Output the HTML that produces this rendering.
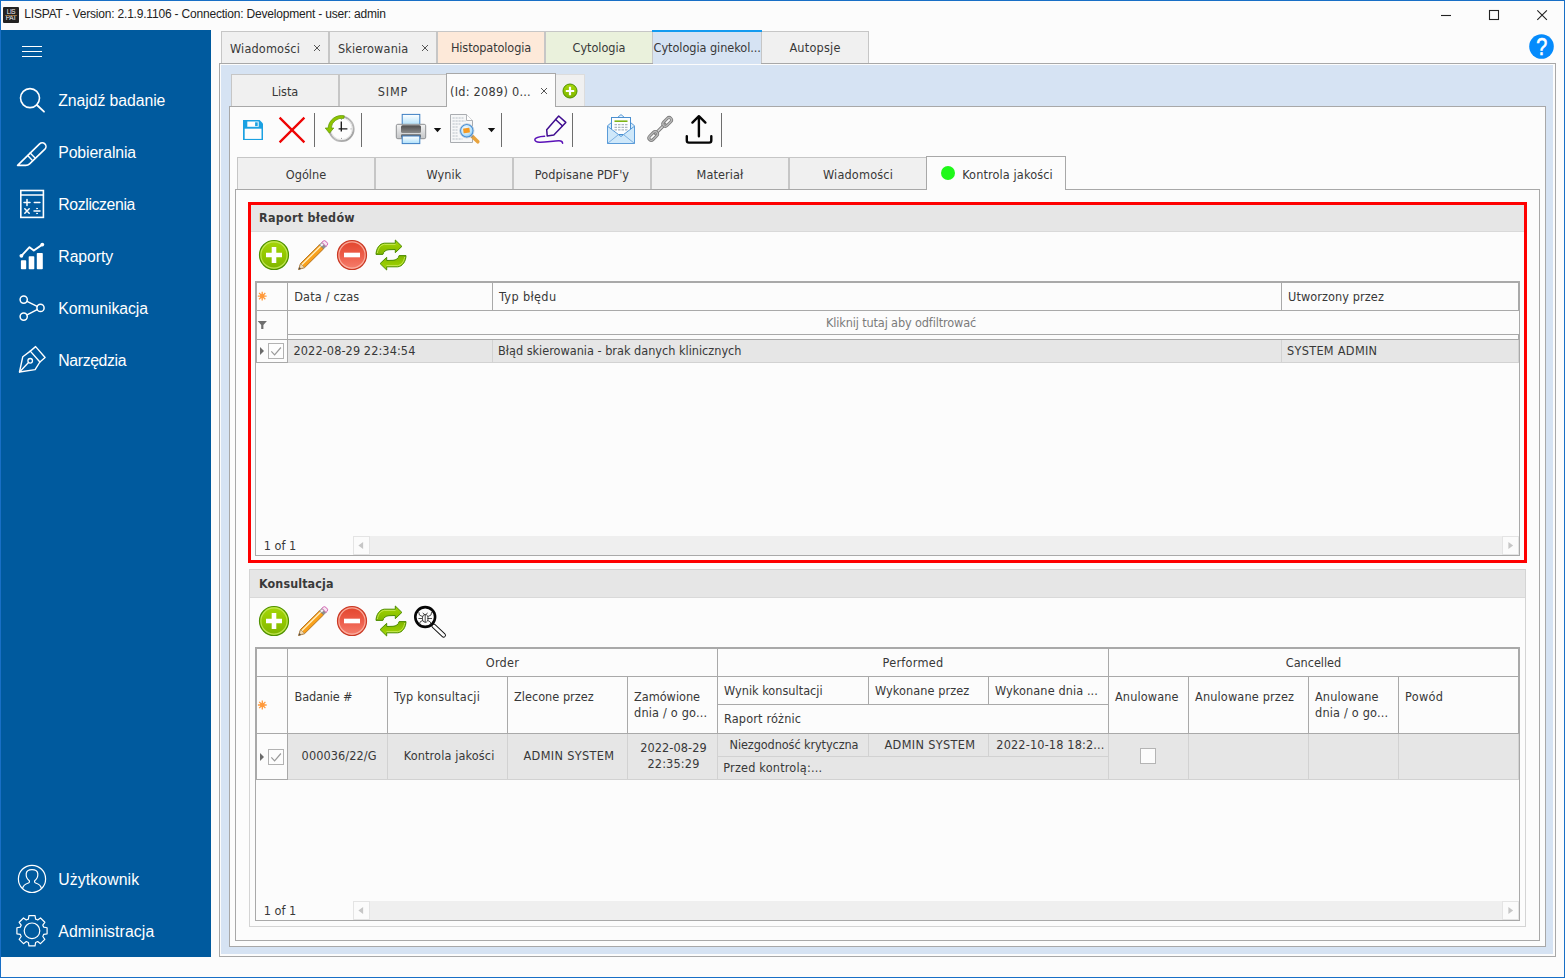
<!DOCTYPE html>
<html lang="pl"><head><meta charset="utf-8"><title>LISPAT</title>
<style>
html,body{margin:0;padding:0;overflow:hidden}
body{width:1565px;height:978px;position:relative;overflow:hidden;background:#fcfcfc;font-family:"DejaVu Sans Condensed","Liberation Sans",sans-serif;font-size:12.6px;color:#383838}
div,span,svg{position:absolute;box-sizing:border-box}
.t{white-space:nowrap;font-size:12.6px}
.b{white-space:nowrap;font-size:12.4px;font-weight:bold;color:#3a3a3a}
.s{white-space:nowrap;font-family:"Liberation Sans",sans-serif;font-size:15.8px;color:#fff}
.ti{white-space:nowrap;font-family:"Liberation Sans",sans-serif;font-size:12px;color:#222}
.g{color:#7b7b7b}
.tab{background:#f0f0f0;border:1px solid #c6c6c6;border-bottom:none}
.hl{background:#a9a9a9}
.cl{background:#d2d2d2}
</style></head><body>

<div style="left:0px;top:0px;width:1565px;height:978px;border:1px solid #186fc6;z-index:50;pointer-events:none"></div>
<div style="left:1px;top:1px;width:1563px;height:29px;background:#fcfcfc"></div>
<div style="left:3px;top:7px;width:16px;height:16px;background:#222;border-radius:1px"><span style="left:0;top:1.5px;width:16px;text-align:center;font:6.3px/6.6px 'Liberation Sans',sans-serif;color:#f2f2f2;letter-spacing:-0.3px">LIS<br>PAT</span><div style="left:2px;top:7.6px;width:12px;height:1px;background:#9a6a2a;opacity:.8"></div></div>
<span class="ti" style="left:24.3px;top:6px;line-height:16px;letter-spacing:-0.194px;">LISPAT - Version: 2.1.9.1106 - Connection: Development - user: admin</span>
<svg style="left:1436px;top:5px" width="120" height="20" viewBox="0 0 120 20"><g stroke="#222" stroke-width="1.1" fill="none"><path d="M5 10.5h10"/><rect x="53.5" y="5.5" width="9" height="9"/><path d="M101.3 5.3l9.6 9.6M110.9 5.3l-9.6 9.6"/></g></svg>
<svg style="left:1529px;top:34px" width="25" height="25" viewBox="0 0 25 25"><circle cx="12.5" cy="12.5" r="12.3" fill="#058bfc"/><text transform="translate(12.700 21.100) scale(0.840 1)" x="0" y="0" text-anchor="middle" font-family="Liberation Sans,sans-serif" font-size="23.500" fill="#fff" stroke="#fff" stroke-width="0.600">?</text></svg>
<div style="left:1px;top:30px;width:210px;height:927px;background:#005a9e"></div>
<div style="left:22px;top:46px;width:20px;height:1px;background:#fff"></div>
<div style="left:22px;top:51px;width:20px;height:1px;background:#fff"></div>
<div style="left:22px;top:56px;width:20px;height:1px;background:#fff"></div>
<span class="s" style="left:58.3px;top:91px;line-height:20px;letter-spacing:-0.075px;">Znajdź badanie</span>
<span class="s" style="left:58.3px;top:143px;line-height:20px;letter-spacing:-0.123px;">Pobieralnia</span>
<span class="s" style="left:58.3px;top:195px;line-height:20px;letter-spacing:-0.372px;">Rozliczenia</span>
<span class="s" style="left:58.3px;top:247px;line-height:20px;letter-spacing:-0.075px;">Raporty</span>
<span class="s" style="left:58.3px;top:299px;line-height:20px;letter-spacing:-0.069px;">Komunikacja</span>
<span class="s" style="left:58.3px;top:351px;line-height:20px;letter-spacing:-0.37px;">Narzędzia</span>
<span class="s" style="left:58.3px;top:870px;line-height:20px;letter-spacing:0.1px;">Użytkownik</span>
<span class="s" style="left:58.3px;top:922px;line-height:20px;letter-spacing:0.09px;">Administracja</span>
<svg style="left:0;top:30px" width="211" height="927" viewBox="0 30 211 927" fill="none" stroke="#fff" stroke-linecap="round" stroke-linejoin="round">
<circle cx="30" cy="98.1" r="9.5" stroke-width="1.6"/><path d="M36.9 105L44 111.7" stroke-width="1.8"/>
<path d="M17.6 165.4L39.6 143.9a3.7 3.7 0 0 1 5.3 5.2L29.6 163.9q-1.6 1.5-3.8 1.5Z" stroke-width="1.6"/><path d="M27.6 155.6l4.4 4.4M30.2 153.1l4.4 4.4" stroke-width="1.4"/>
<rect x="20.8" y="190.5" width="22.6" height="26.9" stroke-width="1.6" stroke-linejoin="miter"/><path d="M20.8 195h22.6" stroke-width="1.5"/><path d="M24 202.6h6M27 199.6v6M34.3 202.6h5.6M24.8 208.8l4.4 4.4M29.2 208.8l-4.4 4.4M34 211h6" stroke-width="1.5"/><circle cx="37" cy="208.6" r="0.5" fill="#fff" stroke-width="0.8"/><circle cx="37" cy="213.4" r="0.5" fill="#fff" stroke-width="0.8"/>
<g fill="#fff" stroke="none"><rect x="20.9" y="260.2" width="5.3" height="9" rx="0.8"/><rect x="28.7" y="256.2" width="5.6" height="13" rx="0.8"/><rect x="36.8" y="252.9" width="6" height="16.3" rx="0.8"/><circle cx="21.4" cy="255.8" r="1.9"/><circle cx="42.3" cy="244.6" r="1.9"/></g><path d="M21.4 255.8L29.5 247.2L33.8 250.5L42.3 244.6" stroke-width="1.9"/>
<circle cx="23.7" cy="299.6" r="3.6" stroke-width="1.5"/><circle cx="40.5" cy="307.9" r="3.6" stroke-width="1.5"/><circle cx="23.7" cy="316.6" r="3.6" stroke-width="1.5"/><path d="M27 301.3L37.2 306.3M27 314.9L37.2 309.6" stroke-width="1.5"/>
<path d="M35.6 346.6L45.1 357.5L39.9 362L30.3 351.1Z" stroke-width="1.4"/><path d="M30.3 351.1L22.8 356.7L19.5 372L35.1 369.6L39.9 362" stroke-width="1.4"/><circle cx="30.2" cy="360.8" r="2.3" stroke-width="1.3"/><path d="M19.5 372L28.5 362.5" stroke-width="1.3"/>
<circle cx="32" cy="878.9" r="13.6" stroke-width="1.2"/><path d="M22.6 888.4c0.6-3.2 2.6-4.4 5.2-5.2c1.6-0.5 1.9-1.4 1.5-2.4c-2.6-2.2-3.3-5-3.1-7.2c0.3-2.6 2.6-4 5.8-4s5.500 1.400 5.800 4c0.200 2.200-0.500 5-3.100 7.200c-0.400 1 -0.100 1.900 1.500 2.400c2.600 0.800 4.600 2 5.200 5.200" stroke-width="1.2"/>
<path d="M28.39 919.14L28.94 915.71L35.06 915.71L35.61 919.14A12.20 12.20 0 0 1 37.69 920.01L37.69 920.01L40.51 917.96L44.84 922.29L42.79 925.11A12.20 12.20 0 0 1 43.66 927.19L43.66 927.19L47.09 927.74L47.09 933.86L43.66 934.41A12.20 12.20 0 0 1 42.79 936.49L42.79 936.49L44.84 939.31L40.51 943.64L37.69 941.59A12.20 12.20 0 0 1 35.61 942.46L35.61 942.46L35.06 945.89L28.94 945.89L28.39 942.46A12.20 12.20 0 0 1 26.31 941.59L26.31 941.59L23.49 943.64L19.16 939.31L21.21 936.49A12.20 12.20 0 0 1 20.34 934.41L20.34 934.41L16.91 933.86L16.91 927.74L20.34 927.19A12.20 12.20 0 0 1 21.21 925.11L21.21 925.11L19.16 922.29L23.49 917.96L26.31 920.01A12.20 12.20 0 0 1 28.39 919.14Z" stroke-width="1.2"/><circle cx="32" cy="930.8" r="7.8" stroke-width="1.2"/>
</svg>
<div style="left:221px;top:31px;width:108px;height:33px;background:#f0f0f0;border:1px solid #c6c6c6;border-bottom:none"></div>
<span class="t" style="left:230px;top:41px;line-height:16px;letter-spacing:0.157px;">Wiadomości</span>
<svg style="left:313px;top:44px" width="8" height="8" viewBox="0 0 8 8"><path d="M1 1l6 6M7 1l-6 6" stroke="#555" stroke-width="1" fill="none"/></svg>
<div style="left:329px;top:31px;width:108px;height:33px;background:#f0f0f0;border:1px solid #c6c6c6;border-bottom:none"></div>
<span class="t" style="left:338px;top:41px;line-height:16px;letter-spacing:0.154px;">Skierowania</span>
<svg style="left:421px;top:44px" width="8" height="8" viewBox="0 0 8 8"><path d="M1 1l6 6M7 1l-6 6" stroke="#555" stroke-width="1" fill="none"/></svg>
<div style="left:437px;top:31px;width:108px;height:33px;background:#fde9d9;border:1px solid #c6c6c6;border-bottom:none"></div>
<span class="t" style="left:191px;width:600px;text-align:center;top:40px;line-height:16px;letter-spacing:-0.118px;">Histopatologia</span>
<div style="left:545px;top:31px;width:108px;height:33px;background:#eaf1dc;border:1px solid #c6c6c6;border-bottom:none"></div>
<span class="t" style="left:299px;width:600px;text-align:center;top:40px;line-height:16px;letter-spacing:-0.064px;">Cytologia</span>
<div style="left:761px;top:31px;width:108px;height:33px;background:#f0f0f0;border:1px solid #c6c6c6;border-bottom:none"></div>
<span class="t" style="left:515px;width:600px;text-align:center;top:40px;line-height:16px;letter-spacing:0.207px;">Autopsje</span>
<div style="left:219px;top:63px;width:1337px;height:894px;background:#fcfcfc;border:1px solid #a8a8a8"></div>
<div style="left:221px;top:65px;width:1332px;height:889px;background:#d6e3f3"></div>
<div style="left:653px;top:32px;width:108px;height:32px;background:#d6e3f3"></div>
<div style="left:652px;top:30px;width:110px;height:2px;background:#139bf0"></div>
<span class="t" style="left:653.6px;top:40px;line-height:16px;letter-spacing:-0.059px;">Cytologia ginekol...</span>
<div class="tab" style="left:231px;top:74px;width:108px;height:33px;"></div>
<span class="t" style="left:-15px;width:600px;text-align:center;top:84px;line-height:16px;letter-spacing:-0.051px;">Lista</span>
<div class="tab" style="left:339px;top:74px;width:108px;height:33px;"></div>
<span class="t" style="left:93px;width:600px;text-align:center;top:84px;line-height:16px;letter-spacing:0.786px;">SIMP</span>
<div style="left:555px;top:74px;width:30px;height:33px;background:#f0f0f0;border:1px solid #dcdcdc;border-bottom:none"></div>
<svg style="left:562px;top:83px" width="16" height="16" viewBox="0 0 16 16"><circle cx="8" cy="8" r="7" fill="url(#gG)" stroke="#4f9100" stroke-width="1"/><path d="M3.800 6.900h3.100V3.800h2.200v3.100h3.100v2.200H9.100v3.100H6.900V9.100H3.800Z" fill="#fff"/></svg>

<div style="left:229px;top:106px;width:1317px;height:841px;background:#fcfcfc;border:1px solid #a8a8a8"></div>
<div style="left:446px;top:73px;width:110px;height:34px;background:#fcfcfc;border:1px solid #a8a8a8;border-bottom:none"></div>
<span class="t" style="left:450px;top:84px;line-height:16px;letter-spacing:0.25px;">(Id: 2089) 0...</span>
<svg style="left:540px;top:87px" width="8" height="8" viewBox="0 0 8 8"><path d="M1 1l6 6M7 1l-6 6" stroke="#555" stroke-width="1" fill="none"/></svg>
<div style="left:314px;top:113px;width:1px;height:34px;background:#6e6e6e"></div>
<div style="left:361px;top:113px;width:1px;height:34px;background:#6e6e6e"></div>
<div style="left:501px;top:113px;width:1px;height:34px;background:#6e6e6e"></div>
<div style="left:572px;top:113px;width:1px;height:34px;background:#6e6e6e"></div>
<div style="left:721px;top:113px;width:1px;height:34px;background:#6e6e6e"></div>
<svg width="0" height="0" style="left:0;top:0"><defs>
<linearGradient id="gG" x1="0" y1="0" x2="0" y2="1"><stop offset="0" stop-color="#a6d60a"/><stop offset="0.5" stop-color="#93c800"/><stop offset="1" stop-color="#7fb400"/></linearGradient>
<linearGradient id="gR" x1="0" y1="0" x2="0" y2="1"><stop offset="0" stop-color="#e2452c"/><stop offset="0.55" stop-color="#ee5f4c"/><stop offset="1" stop-color="#f5806e"/></linearGradient>
<linearGradient id="gP" x1="0" y1="0" x2="0" y2="1"><stop offset="0" stop-color="#ffffff"/><stop offset="1" stop-color="#aee0fb"/></linearGradient>
<linearGradient id="gB" x1="0" y1="0" x2="0" y2="1"><stop offset="0" stop-color="#f4f4f4"/><stop offset="1" stop-color="#c4c6c8"/></linearGradient>
<linearGradient id="gD" x1="0" y1="0" x2="0" y2="1"><stop offset="0" stop-color="#4e4e4e"/><stop offset="1" stop-color="#8a8a8a"/></linearGradient>
<linearGradient id="gC" x1="0" y1="0" x2="1" y2="1"><stop offset="0" stop-color="#8f8f8f"/><stop offset="0.6" stop-color="#bdbdbd"/><stop offset="1" stop-color="#959595"/></linearGradient>
<linearGradient id="gM" x1="0" y1="0" x2="0" y2="1"><stop offset="0" stop-color="#eaf5fd"/><stop offset="1" stop-color="#b9dcf5"/></linearGradient>
<radialGradient id="gL" cx="0.4" cy="0.35" r="0.75"><stop offset="0" stop-color="#f2fbff"/><stop offset="0.6" stop-color="#bfe4fa"/><stop offset="1" stop-color="#6dbcf2"/></radialGradient>
</defs></svg>
<svg style="left:243px;top:120px" width="20" height="20" viewBox="0 0 20 20"><path d="M0 0H16.6L20 3.6V20H0Z" fill="#1ba1e2"/><rect x="1.7" y="8.7" width="16.8" height="10.2" fill="#fdfdfd"/><rect x="4.3" y="1.5" width="11.4" height="5.3" fill="#fdfdfd"/><rect x="12.1" y="2.3" width="2.6" height="3.8" fill="#1ba1e2"/></svg>
<svg style="left:277px;top:115px" width="30" height="30" viewBox="0 0 30 30"><path d="M2.6 2.6L27.4 27.4M27.4 2.6L2.6 27.4" stroke="#ee0505" stroke-width="2.3" fill="none"/></svg>
<svg style="left:324px;top:113px" width="32" height="32" viewBox="0 0 32 32"><circle cx="17.500" cy="15.900" r="12.100" fill="#fdfdfd" stroke="url(#gC)" stroke-width="2"/>
<circle cx="17.500" cy="15.900" r="10.700" fill="none" stroke="#e2e2e2" stroke-width="0.800"/>
<path d="M17.300 18.400V8.600M14.600 15.800H23.400" stroke="#1a1a1a" stroke-width="1.350" fill="none"/>
<path d="M17.500 5.800v1.100M17.500 24.900v1.100M7.400 15.900h1.100M26.500 15.900h1.100" stroke="#8a8a8a" stroke-width="0.800"/>
<path d="M20.300 2.800A13.400 13.400 0 0 0 4.100 15H1.200L5.400 20.200L9.800 15H7.200A10.700 10.700 0 0 1 19.700 5.400Z" fill="#8fc400" stroke="#5c9a00" stroke-width="0.700" stroke-linejoin="round"/></svg>
<svg style="left:395px;top:113px" width="32" height="32" viewBox="0 0 32 32"><rect x="7.200" y="1.400" width="17.600" height="11" fill="url(#gP)" stroke="#3d7fc4" stroke-width="1"/>
<rect x="1.300" y="11.300" width="29.400" height="14.400" rx="1.500" fill="url(#gB)" stroke="#8e9093" stroke-width="1"/>
<rect x="6" y="12.300" width="20" height="7.600" rx="1.500" fill="url(#gD)"/>
<rect x="6" y="21.200" width="20" height="3.500" rx="1" fill="#6a6a6a"/>
<rect x="7.200" y="23" width="17.600" height="7.600" fill="url(#gP)" stroke="#3d7fc4" stroke-width="1"/></svg>
<svg style="left:433px;top:127px" width="9" height="6" viewBox="0 0 9 6"><path d="M0.8 1H8.2L4.500 5.200Z" fill="#111"/></svg>
<svg style="left:487px;top:127px" width="9" height="6" viewBox="0 0 9 6"><path d="M0.8 1H8.2L4.500 5.200Z" fill="#111"/></svg>
<svg style="left:449px;top:113px" width="33" height="33" viewBox="0 0 33 33"><path d="M1.500 1.500H17.500L23.500 7.500V29.500H1.500Z" fill="#f6f7f8" stroke="#a9acb0" stroke-width="1"/><path d="M17.500 1.500V7.500H23.500" fill="#fff" stroke="#a9acb0" stroke-width="0.9"/>
<path d="M3.500 5h11" stroke="#b9c0c8" stroke-width="1" stroke-dasharray="2.200 0.800"/><path d="M3.500 8h13" stroke="#b9c0c8" stroke-width="1" stroke-dasharray="2.200 0.800"/><path d="M3.500 11h8" stroke="#b9c0c8" stroke-width="1" stroke-dasharray="2.200 0.800"/><path d="M3.500 14h6" stroke="#b9c0c8" stroke-width="1" stroke-dasharray="2.200 0.800"/><path d="M3.500 17h5" stroke="#b9c0c8" stroke-width="1" stroke-dasharray="2.200 0.800"/><path d="M3.500 20h5" stroke="#b9c0c8" stroke-width="1" stroke-dasharray="2.200 0.800"/><path d="M3.500 23h6" stroke="#b9c0c8" stroke-width="1" stroke-dasharray="2.200 0.800"/><path d="M3.500 26h10" stroke="#b9c0c8" stroke-width="1" stroke-dasharray="2.200 0.800"/>
<path d="M22.200 22.400L28.800 28.800" stroke="#e8a33d" stroke-width="3.600" stroke-linecap="round"/><path d="M21.400 21.600L23.600 23.800" stroke="#8c8c8c" stroke-width="2.400"/>
<circle cx="17.800" cy="17.800" r="6.400" fill="url(#gL)" stroke="#4a90d6" stroke-width="1.400"/><circle cx="17.800" cy="17.800" r="7.200" fill="none" stroke="#c9d3dc" stroke-width="0.800"/>
<rect x="14.300" y="15.200" width="6.400" height="4.600" rx="0.600" fill="#f59a23" transform="rotate(-8 17.500 17.500)"/></svg>
<svg style="left:532px;top:113px" width="36" height="34" viewBox="532 113 36 34"><g fill="none" stroke="#3f0d8f" stroke-width="1.500" stroke-linejoin="round" stroke-linecap="round"><path d="M553.800 135.100L565.800 122.400L558.700 116L546.700 129.700L547.200 135.900Z"/><path d="M555.600 119.500L562.300 125.800"/>
<path d="M544.600 136.200C540 136.500 535.500 137.300 534.900 139.300C534.500 141 536.500 142 539.500 142.200C545 142.500 553 140.800 559 140.700C561.500 140.700 562.500 141.800 562.600 143.300" stroke="#5a12b8"/></g></svg>
<svg style="left:605px;top:112px" width="33" height="34" viewBox="605 112 33 34"><path d="M607.500 125.800L621 114.600L634.500 125.800V143.500H607.500Z" fill="url(#gM)" stroke="#5a9bd8" stroke-width="1"/>
<rect x="611.500" y="117.500" width="19" height="17" fill="#fbfdff" stroke="#4a8fd0" stroke-width="1"/>
<path d="M614.500 121.200h13" stroke="#7fb414" stroke-width="1.600"/><path d="M614.500 124.700h13M614.500 127.300h13M614.500 129.900h13" stroke="#9aa7b3" stroke-width="1" stroke-dasharray="2.500 1"/>
<path d="M607.500 126.200L621 136.500L634.500 126.200V143.500H607.500Z" fill="#cfe8fa" stroke="#5a9bd8" stroke-width="1" stroke-linejoin="round"/>
<path d="M607.800 143.200L618.500 134.600M634.200 143.200L623.500 134.600" stroke="#7fb2e2" stroke-width="1"/></svg>
<svg style="left:644px;top:113px" width="32" height="32" viewBox="644 113 32 32"><g fill="none" stroke-linecap="round"><path d="M655.600 133.600L664.900 124.300" stroke="#7c7c7c" stroke-width="3.400"/><path d="M655.600 133.600L664.900 124.300" stroke="#d6d6d6" stroke-width="1.400"/><g transform="rotate(-45 667.2 121.9)"><rect x="662.10" y="119.50" width="10.2" height="4.8" rx="2.400" stroke="#7c7c7c" stroke-width="3"/><rect x="662.10" y="119.50" width="10.2" height="4.8" rx="2.400" stroke="#b9b9b9" stroke-width="1.300"/></g><g transform="rotate(-45 653.2 136)"><rect x="648.10" y="133.60" width="10.2" height="4.8" rx="2.400" stroke="#7c7c7c" stroke-width="3"/><rect x="648.10" y="133.60" width="10.2" height="4.8" rx="2.400" stroke="#b9b9b9" stroke-width="1.300"/></g></g></svg>
<svg style="left:684px;top:113px" width="30" height="33" viewBox="684 113 30 33"><g fill="none" stroke="#050505" stroke-width="2.400" stroke-linecap="round" stroke-linejoin="round"><path d="M698.900 116.300V136.200M692.400 122.600L698.900 116.200L705.400 122.600"/><path d="M686.800 136.300V140.500Q686.800 142.600 688.900 142.600H709.200Q711.300 142.600 711.300 140.500V136.300"/></g></svg>

<div class="tab" style="left:237px;top:157px;width:138px;height:33px;"></div>
<span class="t" style="left:6px;width:600px;text-align:center;top:167px;line-height:16px;letter-spacing:0.056px;">Ogólne</span>
<div class="tab" style="left:375px;top:157px;width:138px;height:33px;"></div>
<span class="t" style="left:144px;width:600px;text-align:center;top:167px;line-height:16px;letter-spacing:0.061px;">Wynik</span>
<div class="tab" style="left:513px;top:157px;width:138px;height:33px;"></div>
<span class="t" style="left:282px;width:600px;text-align:center;top:167px;line-height:16px;letter-spacing:0.061px;">Podpisane PDF&#x27;y</span>
<div class="tab" style="left:651px;top:157px;width:138px;height:33px;"></div>
<span class="t" style="left:420px;width:600px;text-align:center;top:167px;line-height:16px;letter-spacing:0.085px;">Materiał</span>
<div class="tab" style="left:789px;top:157px;width:138px;height:33px;"></div>
<span class="t" style="left:558px;width:600px;text-align:center;top:167px;line-height:16px;letter-spacing:0.157px;">Wiadomości</span>
<div style="left:235px;top:189px;width:1305px;height:752px;background:#fcfcfc;border:1px solid #a8a8a8"></div>
<div style="left:926px;top:156px;width:140px;height:34px;background:#fcfcfc;border:1px solid #a8a8a8;border-bottom:none"></div>
<div style="left:941px;top:166px;width:14px;height:14px;background:#1ff81a;border-radius:50%"></div>
<span class="t" style="left:962.2px;top:167px;line-height:16px;letter-spacing:0.118px;">Kontrola jakości</span>
<div style="left:248px;top:202px;width:1279px;height:361px;border:3px solid #fe0000"></div>
<div style="left:251px;top:205px;width:1273px;height:26px;background:#e6e6e6"></div>
<div style="left:251px;top:231px;width:1273px;height:1px;background:#d9d9d9"></div>
<span class="b" style="left:259px;top:210px;line-height:16px;letter-spacing:0.297px;">Raport błedów</span>
<svg style="left:258px;top:239px" width="32" height="32" viewBox="0 0 32 32"><circle cx="16" cy="16" r="14.500" fill="url(#gG)" stroke="#4f9100" stroke-width="1.200"/><circle cx="16" cy="16" r="13.100" fill="none" stroke="#c4e85a" stroke-width="1.100" opacity="0.900"/>
<path d="M8 13.700h5.700V8h4.600v5.700H24v4.600h-5.700V24h-4.600v-5.700H8Z" fill="#fff"/></svg>
<svg style="left:296px;top:238px" width="34" height="34" viewBox="0 0 34 34"><g transform="translate(2.600 31.500) rotate(-44.700)"><path d="M0 0L5.600 -2.900H32.300V2.900H5.600Z" fill="#f9a11b" stroke="#a8620e" stroke-width="0.800" stroke-linejoin="round"/><path d="M5.600 -1.700H32.300V-0.400H5.600Z" fill="#fff0c4"/>
<path d="M0.300 0L5.600 -2.700V2.700Z" fill="#f3d9ae" stroke="#9a8460" stroke-width="0.500"/><path d="M0 0L2.300 -1.100V1.100Z" fill="#4a4a4a"/>
<rect x="32.300" y="-2.900" width="3.400" height="5.800" fill="#8e8e8e" stroke="#777" stroke-width="0.500"/><rect x="32.600" y="-2.300" width="2.800" height="2.300" fill="#f2f2f2"/><path d="M35.700 -2.900H37.300a2 2.900 0 0 1 0 5.800H35.700Z" fill="#f6e6f0" stroke="#d05fb0" stroke-width="0.900"/></g></svg>
<svg style="left:336px;top:239px" width="32" height="32" viewBox="0 0 32 32"><circle cx="16" cy="16" r="14.500" fill="url(#gR)" stroke="#c93a25" stroke-width="1.200"/><circle cx="16" cy="16" r="13.100" fill="none" stroke="#fbb5a6" stroke-width="1.100" opacity="0.900"/>
<rect x="8" y="13.700" width="16" height="4.600" fill="#fff"/></svg>
<svg style="left:375px;top:239px" width="32" height="32" viewBox="0 0 32 32"><g transform="translate(16 16)" fill="url(#gG)" stroke="#4c8c00" stroke-width="1" stroke-linejoin="round"><path d="M-15 -0.600H-8.100C-7.500 -3.500 -5 -5.200 -2 -5.300L4.300 -5.500V-2.300L10.900 -8.600L4.300 -15V-11.800H-6.600C-11.500 -11.500 -14.800 -6.500 -15 -0.600Z"/><path d="M-15 -0.600H-8.100C-7.500 -3.500 -5 -5.200 -2 -5.300L4.300 -5.500V-2.300L10.900 -8.600L4.300 -15V-11.800H-6.600C-11.500 -11.500 -14.800 -6.500 -15 -0.600Z" transform="rotate(180)"/></g>
<g transform="translate(16 16)" fill="none" stroke="#d4f06a" stroke-width="0.900" opacity="0.850"><path d="M-13.600 -2C-13 -6.500 -10.500 -10.200 -6.400 -10.600H4.500"/><path d="M-13.600 -2C-13 -6.500 -10.500 -10.200 -6.400 -10.600H4.500" transform="rotate(180)"/></g></svg>

<div style="left:255px;top:281px;width:1265px;height:275px;border:1px solid #a9a9a9"></div>
<div class="hl" style="left:256px;top:282px;width:1263px;height:1px;"></div>
<div class="hl" style="left:256px;top:283px;width:1px;height:80px;"></div>
<div class="hl" style="left:257px;top:310px;width:1262px;height:1px;"></div>
<div class="hl" style="left:287px;top:283px;width:1px;height:27px;"></div>
<div class="hl" style="left:492px;top:283px;width:1px;height:27px;"></div>
<div class="hl" style="left:1281px;top:283px;width:1px;height:27px;"></div>
<div class="hl" style="left:1518px;top:283px;width:1px;height:27px;"></div>
<div class="hl" style="left:287px;top:310px;width:1px;height:53px;"></div>
<span class="t" style="left:294.2px;top:289px;line-height:16px;letter-spacing:0.189px;">Data / czas</span>
<span class="t" style="left:499px;top:289px;line-height:16px;letter-spacing:0.362px;">Typ błędu</span>
<span class="t" style="left:1288px;top:289px;line-height:16px;letter-spacing:0.086px;">Utworzony przez</span>
<div class="hl" style="left:288px;top:334px;width:1231px;height:1px;"></div>
<div class="hl" style="left:1518px;top:335px;width:1px;height:4px;"></div>
<div class="hl" style="left:257px;top:339px;width:1262px;height:1px;"></div>
<span class="t g" style="left:601px;width:600px;text-align:center;top:315px;line-height:16px;letter-spacing:-0.139px;">Kliknij tutaj aby odfiltrować</span>
<div style="left:288px;top:340px;width:1231px;height:22px;background:#e6e6e6"></div>
<div class="cl" style="left:257px;top:362px;width:1262px;height:1px;"></div>
<div class="hl" style="left:257px;top:362px;width:31px;height:1px;"></div>
<div class="cl" style="left:492px;top:340px;width:1px;height:22px;"></div>
<div class="cl" style="left:1281px;top:340px;width:1px;height:22px;"></div>
<div class="cl" style="left:1518px;top:340px;width:1px;height:22px;"></div>
<span class="t" style="left:293.5px;top:343px;line-height:16px;letter-spacing:0.085px;">2022-08-29 22:34:54</span>
<span class="t" style="left:498px;top:343px;line-height:16px;letter-spacing:-0.013px;">Błąd skierowania - brak danych klinicznych</span>
<span class="t" style="left:1287px;top:343px;line-height:16px;letter-spacing:0.295px;">SYSTEM ADMIN</span>
<svg style="left:257px;top:283px" width="30" height="80" viewBox="257 283 30 80"><path d="M262.2 296.1L266.60 296.10M262.2 296.1L265.31 299.21M262.2 296.1L262.20 300.50M262.2 296.1L259.09 299.21M262.2 296.1L257.80 296.10M262.2 296.1L259.09 292.99M262.2 296.1L262.20 291.70M262.2 296.1L265.31 292.99" stroke="#ff9a3c" stroke-width="1.300" fill="none"/><circle cx="262.2" cy="296.1" r="2.300" fill="#ff9a3c"/><path d="M257.700 321h9.200l-3.500 4v3.900h-2.200v-3.900z" fill="#6f6f6f"/><path d="M260 347v8l4 -4z" fill="#6a6a6a"/><rect x="268.500" y="343.5" width="15" height="15" fill="#fdfdfd" stroke="#b2b2b2" stroke-width="1"/><path d="M271.300 351.3l3.300 3.500l6.300 -7.300" fill="none" stroke="#9a9a9a" stroke-width="1.200"/></svg>

<span class="t" style="left:263.7px;top:538px;line-height:16px;letter-spacing:-0.007px;">1 of 1</span>
<div style="left:353px;top:536px;width:1166px;height:19px;background:#efefef"></div>
<div style="left:353px;top:536px;width:17px;height:19px;background:#fbfbfb;border:1px solid #e4e4e4"></div>
<div style="left:1502px;top:536px;width:17px;height:19px;background:#fbfbfb;border:1px solid #e4e4e4"></div>
<svg style="left:358px;top:541px" width="6" height="9" viewBox="0 0 6 9"><path d="M5.1 1.100v6.800l-4.700 -3.400z" fill="#c6c6c6"/></svg>
<svg style="left:1508px;top:541px" width="6" height="9" viewBox="0 0 6 9"><path d="M0.400 1.100v6.800l4.700 -3.400z" fill="#c6c6c6"/></svg>
<div style="left:249px;top:569px;width:1277px;height:358px;border:1px solid #d4d4d4"></div>
<div style="left:250px;top:570px;width:1275px;height:27px;background:#e6e6e6"></div>
<div style="left:250px;top:597px;width:1275px;height:1px;background:#d9d9d9"></div>
<span class="b" style="left:259px;top:576px;line-height:16px;letter-spacing:0.122px;">Konsultacja</span>
<svg style="left:258px;top:605px" width="32" height="32" viewBox="0 0 32 32"><circle cx="16" cy="16" r="14.500" fill="url(#gG)" stroke="#4f9100" stroke-width="1.200"/><circle cx="16" cy="16" r="13.100" fill="none" stroke="#c4e85a" stroke-width="1.100" opacity="0.900"/>
<path d="M8 13.700h5.700V8h4.600v5.700H24v4.600h-5.700V24h-4.600v-5.700H8Z" fill="#fff"/></svg>
<svg style="left:296px;top:604px" width="34" height="34" viewBox="0 0 34 34"><g transform="translate(2.600 31.500) rotate(-44.700)"><path d="M0 0L5.600 -2.900H32.300V2.900H5.600Z" fill="#f9a11b" stroke="#a8620e" stroke-width="0.800" stroke-linejoin="round"/><path d="M5.600 -1.700H32.300V-0.400H5.600Z" fill="#fff0c4"/>
<path d="M0.300 0L5.600 -2.700V2.700Z" fill="#f3d9ae" stroke="#9a8460" stroke-width="0.500"/><path d="M0 0L2.300 -1.100V1.100Z" fill="#4a4a4a"/>
<rect x="32.300" y="-2.900" width="3.400" height="5.800" fill="#8e8e8e" stroke="#777" stroke-width="0.500"/><rect x="32.600" y="-2.300" width="2.800" height="2.300" fill="#f2f2f2"/><path d="M35.700 -2.900H37.300a2 2.900 0 0 1 0 5.800H35.700Z" fill="#f6e6f0" stroke="#d05fb0" stroke-width="0.900"/></g></svg>
<svg style="left:336px;top:605px" width="32" height="32" viewBox="0 0 32 32"><circle cx="16" cy="16" r="14.500" fill="url(#gR)" stroke="#c93a25" stroke-width="1.200"/><circle cx="16" cy="16" r="13.100" fill="none" stroke="#fbb5a6" stroke-width="1.100" opacity="0.900"/>
<rect x="8" y="13.700" width="16" height="4.600" fill="#fff"/></svg>
<svg style="left:375px;top:605px" width="32" height="32" viewBox="0 0 32 32"><g transform="translate(16 16)" fill="url(#gG)" stroke="#4c8c00" stroke-width="1" stroke-linejoin="round"><path d="M-15 -0.600H-8.100C-7.500 -3.500 -5 -5.200 -2 -5.300L4.300 -5.500V-2.300L10.900 -8.600L4.300 -15V-11.800H-6.600C-11.500 -11.500 -14.800 -6.500 -15 -0.600Z"/><path d="M-15 -0.600H-8.100C-7.500 -3.500 -5 -5.200 -2 -5.300L4.300 -5.500V-2.300L10.900 -8.600L4.300 -15V-11.800H-6.600C-11.500 -11.500 -14.800 -6.500 -15 -0.600Z" transform="rotate(180)"/></g>
<g transform="translate(16 16)" fill="none" stroke="#d4f06a" stroke-width="0.900" opacity="0.850"><path d="M-13.600 -2C-13 -6.500 -10.500 -10.200 -6.400 -10.600H4.500"/><path d="M-13.600 -2C-13 -6.500 -10.500 -10.200 -6.400 -10.600H4.500" transform="rotate(180)"/></g></svg>
<svg style="left:412px;top:604px" width="36" height="36" viewBox="412 604 36 36"><path d="M433.800 626L443.600 635.2" stroke="#111" stroke-width="4.700" stroke-linecap="round"/><path d="M433.800 626L443.600 635.2" stroke="#fcfcfc" stroke-width="2.900" stroke-linecap="round"/>
<circle cx="425.200" cy="617" r="9.900" fill="#fcfcfc" stroke="#050505" stroke-width="2.600"/>
<g fill="none" stroke="#2e2e2e" stroke-width="0.850" stroke-linecap="round"><ellipse cx="425.200" cy="618.4" rx="2.900" ry="3.900"/><path d="M425.200 615.5v6.500M423 613.2l2.200 1.800l2.200 -1.800M422.400 616.5l-3 -1.500l-0.500 -2.500M428 616.5l3 -1.500l0.500 -2.500M422.300 618.5h-3.500M428.100 618.5h3.500M422.500 620.5l-2.500 1.500l-0.500 2.500M427.900 620.5l2.500 1.500l0.500 2.500"/></g></svg>

<div style="left:255px;top:647px;width:1265px;height:274px;border:1px solid #a9a9a9"></div>
<div class="hl" style="left:256px;top:648px;width:1263px;height:1px;"></div>
<div class="hl" style="left:256px;top:649px;width:1px;height:131px;"></div>
<div class="hl" style="left:257px;top:676px;width:1262px;height:1px;"></div>
<div class="hl" style="left:257px;top:733px;width:1262px;height:1px;"></div>
<div class="hl" style="left:287px;top:649px;width:1px;height:85px;"></div>
<div class="hl" style="left:717px;top:649px;width:1px;height:85px;"></div>
<div class="hl" style="left:1108px;top:649px;width:1px;height:85px;"></div>
<div class="hl" style="left:1518px;top:649px;width:1px;height:85px;"></div>
<div class="hl" style="left:387px;top:677px;width:1px;height:56px;"></div>
<div class="hl" style="left:507px;top:677px;width:1px;height:56px;"></div>
<div class="hl" style="left:627px;top:677px;width:1px;height:56px;"></div>
<div class="hl" style="left:1188px;top:677px;width:1px;height:56px;"></div>
<div class="hl" style="left:1308px;top:677px;width:1px;height:56px;"></div>
<div class="hl" style="left:1398px;top:677px;width:1px;height:56px;"></div>
<div class="hl" style="left:868px;top:677px;width:1px;height:27px;"></div>
<div class="hl" style="left:988px;top:677px;width:1px;height:27px;"></div>
<div class="hl" style="left:718px;top:704px;width:390px;height:1px;"></div>
<span class="t" style="left:202.5px;width:600px;text-align:center;top:655px;line-height:16px;letter-spacing:0.262px;">Order</span>
<span class="t" style="left:613px;width:600px;text-align:center;top:655px;line-height:16px;letter-spacing:0.256px;">Performed</span>
<span class="t" style="left:1013.5px;width:600px;text-align:center;top:655px;line-height:16px;letter-spacing:-0.037px;">Cancelled</span>
<span class="t" style="left:294.5px;top:689px;line-height:16px;letter-spacing:-0.142px;">Badanie #</span>
<span class="t" style="left:394px;top:689px;line-height:16px;letter-spacing:0.216px;">Typ konsultacji</span>
<span class="t" style="left:514px;top:689px;line-height:16px;letter-spacing:0.012px;">Zlecone przez</span>
<span class="t" style="left:634px;top:689px;line-height:16px;letter-spacing:-0.012px;">Zamówione</span>
<span class="t" style="left:634px;top:705px;line-height:16px;letter-spacing:0.19px;">dnia / o go...</span>
<span class="t" style="left:724px;top:683px;line-height:16px;letter-spacing:0.006px;">Wynik konsultacji</span>
<span class="t" style="left:875px;top:683px;line-height:16px;letter-spacing:0.067px;">Wykonane przez</span>
<span class="t" style="left:995px;top:683px;line-height:16px;letter-spacing:0.087px;">Wykonane dnia ...</span>
<span class="t" style="left:724px;top:711px;line-height:16px;letter-spacing:0.153px;">Raport różnic</span>
<span class="t" style="left:1115px;top:689px;line-height:16px;letter-spacing:0.112px;">Anulowane</span>
<span class="t" style="left:1195px;top:689px;line-height:16px;letter-spacing:0.152px;">Anulowane przez</span>
<span class="t" style="left:1315px;top:689px;line-height:16px;letter-spacing:0.112px;">Anulowane</span>
<span class="t" style="left:1315px;top:705px;line-height:16px;letter-spacing:0.19px;">dnia / o go...</span>
<span class="t" style="left:1405px;top:689px;line-height:16px;letter-spacing:0.335px;">Powód</span>
<div style="left:288px;top:734px;width:1231px;height:45px;background:#e6e6e6"></div>
<div class="cl" style="left:257px;top:779px;width:1262px;height:1px;"></div>
<div class="hl" style="left:257px;top:779px;width:31px;height:1px;"></div>
<div class="hl" style="left:287px;top:734px;width:1px;height:46px;"></div>
<div class="cl" style="left:387px;top:734px;width:1px;height:45px;"></div>
<div class="cl" style="left:507px;top:734px;width:1px;height:45px;"></div>
<div class="cl" style="left:627px;top:734px;width:1px;height:45px;"></div>
<div class="cl" style="left:717px;top:734px;width:1px;height:45px;"></div>
<div class="cl" style="left:1108px;top:734px;width:1px;height:45px;"></div>
<div class="cl" style="left:1188px;top:734px;width:1px;height:45px;"></div>
<div class="cl" style="left:1308px;top:734px;width:1px;height:45px;"></div>
<div class="cl" style="left:1398px;top:734px;width:1px;height:45px;"></div>
<div class="cl" style="left:1518px;top:734px;width:1px;height:45px;"></div>
<div class="cl" style="left:868px;top:734px;width:1px;height:22px;"></div>
<div class="cl" style="left:988px;top:734px;width:1px;height:22px;"></div>
<div class="cl" style="left:718px;top:756px;width:390px;height:1px;"></div>
<span class="t" style="left:39.10000000000002px;width:600px;text-align:center;top:748px;line-height:16px;letter-spacing:0.081px;">000036/22/G</span>
<span class="t" style="left:149.10000000000002px;width:600px;text-align:center;top:748px;line-height:16px;letter-spacing:0.118px;">Kontrola jakości</span>
<span class="t" style="left:269px;width:600px;text-align:center;top:748px;line-height:16px;letter-spacing:0.345px;">ADMIN SYSTEM</span>
<span class="t" style="left:373.5px;width:600px;text-align:center;top:740px;line-height:16px;letter-spacing:0.063px;">2022-08-29</span>
<span class="t" style="left:373.5px;width:600px;text-align:center;top:756px;line-height:16px;letter-spacing:0.162px;">22:35:29</span>
<span class="t" style="left:494px;width:600px;text-align:center;top:737px;line-height:16px;letter-spacing:-0.106px;">Niezgodność krytyczna</span>
<span class="t" style="left:630px;width:600px;text-align:center;top:737px;line-height:16px;letter-spacing:0.345px;">ADMIN SYSTEM</span>
<span class="t" style="left:996.3px;top:737px;line-height:16px;letter-spacing:0.143px;">2022-10-18 18:2...</span>
<span class="t" style="left:723.3px;top:760px;line-height:16px;letter-spacing:0.183px;">Przed kontrolą:...</span>
<div style="left:1140px;top:748px;width:16px;height:16px;background:#fcfcfc;border:1px solid #b4b4b4"></div>
<svg style="left:257px;top:649px" width="30" height="131" viewBox="257 649 30 131"><path d="M262.3 705.0L266.70 705.00M262.3 705.0L265.41 708.11M262.3 705.0L262.30 709.40M262.3 705.0L259.19 708.11M262.3 705.0L257.90 705.00M262.3 705.0L259.19 701.89M262.3 705.0L262.30 700.60M262.3 705.0L265.41 701.89" stroke="#ff9a3c" stroke-width="1.300" fill="none"/><circle cx="262.3" cy="705" r="2.300" fill="#ff9a3c"/><path d="M260 753v8l4 -4z" fill="#6a6a6a"/><rect x="268.500" y="749.5" width="15" height="15" fill="#fdfdfd" stroke="#b2b2b2" stroke-width="1"/><path d="M271.300 757.3l3.300 3.500l6.300 -7.300" fill="none" stroke="#9a9a9a" stroke-width="1.200"/></svg>

<span class="t" style="left:263.7px;top:903px;line-height:16px;letter-spacing:-0.007px;">1 of 1</span>
<div style="left:353px;top:901px;width:1166px;height:19px;background:#efefef"></div>
<div style="left:353px;top:901px;width:17px;height:19px;background:#fbfbfb;border:1px solid #e4e4e4"></div>
<div style="left:1502px;top:901px;width:17px;height:19px;background:#fbfbfb;border:1px solid #e4e4e4"></div>
<svg style="left:358px;top:906px" width="6" height="9" viewBox="0 0 6 9"><path d="M5.1 1.100v6.800l-4.700 -3.400z" fill="#c6c6c6"/></svg>
<svg style="left:1508px;top:906px" width="6" height="9" viewBox="0 0 6 9"><path d="M0.400 1.100v6.800l4.700 -3.400z" fill="#c6c6c6"/></svg>
</body></html>
